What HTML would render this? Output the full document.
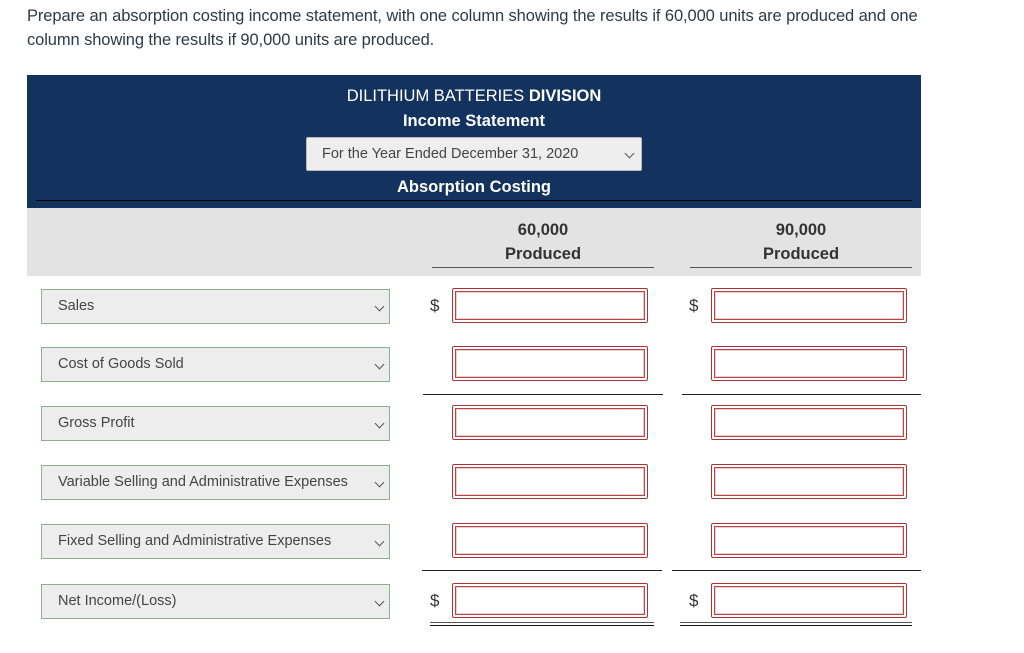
<!DOCTYPE html>
<html><head><style>
body{margin:0;width:1024px;height:653px;background:#fff;font-family:"Liberation Sans",sans-serif;color:#2d3b45;position:relative;overflow:hidden}
.a{position:absolute}
.p{left:27px;top:4px;font-size:16.5px;line-height:24px;width:990px;letter-spacing:-0.1px}
.hdr{left:27px;top:75px;width:894px;height:133px;background:#14325e}
.w{color:#fff;text-align:center;width:894px;left:27px;font-size:16.5px}
.date{left:306px;top:137px;height:34px;background:#eeeeee;border:1px solid #bbb;border-radius:2px;font-size:14.5px;color:#444;line-height:33px;padding-left:15px;box-sizing:border-box;width:336px}
.gray{left:27px;top:208px;width:894px;height:68px;background:#e3e3e3}
.ch{font-size:16.5px;color:#333;text-align:center;width:222px;font-weight:bold}
.sel{left:41px;width:349px;height:35px;box-sizing:border-box;background:#ededed;border:1px solid #8bb08b;font-size:14.5px;color:#444;line-height:33px;padding-left:16px}
.chev{position:absolute;right:6px;top:13px;width:6px;height:6px;border-right:1px solid #555;border-bottom:1px solid #555;transform:rotate(45deg)}
.in{width:196px;height:35px;box-sizing:border-box;border:1px solid #a33;border-radius:2px;background:#fff}
.in::after{content:"";position:absolute;left:2px;top:2px;right:2px;bottom:2px;border:1px solid #b44;box-shadow:inset 0 0 0 1px #e9d0d0}
.d{font-size:17px;color:#333}
.ln{height:1px;background:#222}
</style></head><body>
<div class="a p">Prepare an absorption costing income statement, with one column showing the results if 60,000 units are produced and one<br>column showing the results if 90,000 units are produced.</div>
<div class="a hdr"></div>
<div class="a w" style="top:87px">DILITHIUM BATTERIES <b>DIVISION</b></div>
<div class="a w" style="top:112px;font-weight:bold">Income Statement</div>
<div class="a date">For the Year Ended December 31, 2020<div class="chev" style="right:8px;top:12px"></div></div>
<div class="a w" style="top:178px;font-weight:bold">Absorption Costing</div>
<div class="a" style="left:36px;top:200px;width:876px;height:1px;background:#000"></div>
<div class="a gray"></div>
<div class="a ch" style="left:432px;top:221px">60,000</div>
<div class="a ch" style="left:432px;top:245px">Produced</div>
<div class="a" style="left:432px;top:267px;width:222px;height:1px;background:#555"></div>
<div class="a ch" style="left:690px;top:221px">90,000</div>
<div class="a ch" style="left:690px;top:245px">Produced</div>
<div class="a" style="left:690px;top:267px;width:222px;height:1px;background:#555"></div>

<div class="a sel" style="top:289px">Sales<div class="chev"></div></div>
<div class="a sel" style="top:347px">Cost of Goods Sold<div class="chev"></div></div>
<div class="a sel" style="top:406px">Gross Profit<div class="chev"></div></div>
<div class="a sel" style="top:465px">Variable Selling and Administrative Expenses<div class="chev"></div></div>
<div class="a sel" style="top:524px">Fixed Selling and Administrative Expenses<div class="chev"></div></div>
<div class="a sel" style="top:584px">Net Income/(Loss)<div class="chev"></div></div>

<div class="a d" style="left:430px;top:296px">$</div>
<div class="a d" style="left:689px;top:296px">$</div>
<div class="a d" style="left:430px;top:591px">$</div>
<div class="a d" style="left:689px;top:591px">$</div>

<div class="a in" style="left:452px;top:288px"></div><div class="a in" style="left:711px;top:288px"></div>
<div class="a in" style="left:452px;top:346px"></div><div class="a in" style="left:711px;top:346px"></div>
<div class="a in" style="left:452px;top:405px"></div><div class="a in" style="left:711px;top:405px"></div>
<div class="a in" style="left:452px;top:464px"></div><div class="a in" style="left:711px;top:464px"></div>
<div class="a in" style="left:452px;top:523px"></div><div class="a in" style="left:711px;top:523px"></div>
<div class="a in" style="left:452px;top:583px"></div><div class="a in" style="left:711px;top:583px"></div>

<div class="a ln" style="left:423px;top:394px;width:240px"></div>
<div class="a ln" style="left:682px;top:394px;width:239px"></div>
<div class="a ln" style="left:422px;top:570px;width:240px"></div>
<div class="a ln" style="left:672px;top:570px;width:249px"></div>
<div class="a" style="left:430px;top:622px;width:224px;height:2px;border-top:1px solid #555;border-bottom:1px solid #111"></div>
<div class="a" style="left:680px;top:622px;width:232px;height:2px;border-top:1px solid #555;border-bottom:1px solid #111"></div>
</body></html>
